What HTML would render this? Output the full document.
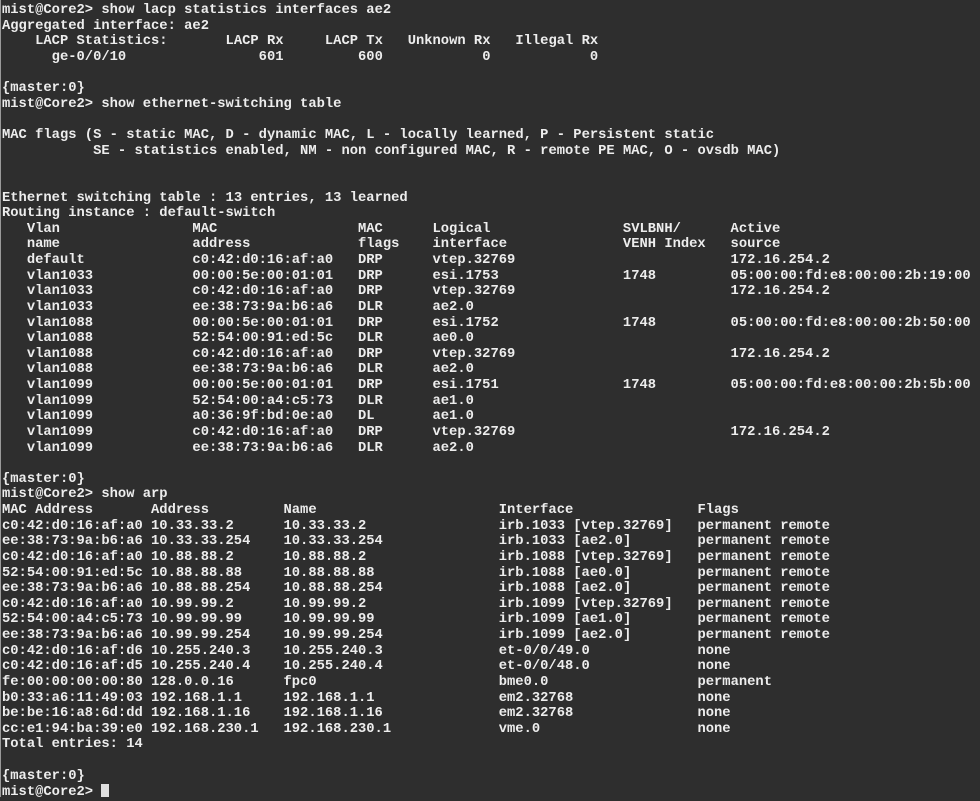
<!DOCTYPE html>
<html><head><meta charset="utf-8"><style>
html,body{margin:0;padding:0;}
body{width:980px;height:797px;background:#2e2e2e;overflow:hidden;position:relative;}
.b{position:absolute;left:0;top:0;width:1px;height:797px;background:#9a9a9a;}
#t{position:absolute;left:2px;top:3px;font-family:"Liberation Mono",monospace;font-weight:bold;font-size:13.8px;color:#ededed;white-space:normal;}
#t div{height:15.64px;line-height:15.64px;white-space:pre;}
i{font-style:normal;display:inline-block;white-space:pre;}
.v{width:20ch}.m{width:20ch}.f{width:9ch}.l{width:23ch}.s{width:13ch}
.a{width:18ch}.d{width:16ch}.n{width:26ch}.x{width:24ch}
.cur{display:inline-block;width:8px;height:13px;background:#e0e0e0;vertical-align:-2px;}
</style></head><body><div class="b"></div><div id="t"><div>mist@Core2&gt; show lacp statistics interfaces ae2</div><div>Aggregated interface: ae2</div><div>    LACP Statistics:       LACP Rx     LACP Tx   Unknown Rx   Illegal Rx</div><div>      ge-0/0/10                601         600            0            0</div><div></div><div>{master:0}</div><div>mist@Core2&gt; show ethernet-switching table</div><div></div><div>MAC flags (S - static MAC, D - dynamic MAC, L - locally learned, P - Persistent static</div><div>           SE - statistics enabled, NM - non configured MAC, R - remote PE MAC, O - ovsdb MAC)</div><div></div><div></div><div>Ethernet switching table : 13 entries, 13 learned</div><div>Routing instance : default-switch</div><div>   <i class="v">Vlan</i><i class="m">MAC</i><i class="f">MAC</i><i class="l">Logical</i><i class="s">SVLBNH/</i>Active</div><div>   <i class="v">name</i><i class="m">address</i><i class="f">flags</i><i class="l">interface</i><i class="s">VENH Index</i>source</div><div>   <i class="v">default</i><i class="m">c0:42:d0:16:af:a0</i><i class="f">DRP</i><i class="l">vtep.32769</i><i class="s"></i>172.16.254.2</div><div>   <i class="v">vlan1033</i><i class="m">00:00:5e:00:01:01</i><i class="f">DRP</i><i class="l">esi.1753</i><i class="s">1748</i>05:00:00:fd:e8:00:00:2b:19:00</div><div>   <i class="v">vlan1033</i><i class="m">c0:42:d0:16:af:a0</i><i class="f">DRP</i><i class="l">vtep.32769</i><i class="s"></i>172.16.254.2</div><div>   <i class="v">vlan1033</i><i class="m">ee:38:73:9a:b6:a6</i><i class="f">DLR</i><i class="l">ae2.0</i></div><div>   <i class="v">vlan1088</i><i class="m">00:00:5e:00:01:01</i><i class="f">DRP</i><i class="l">esi.1752</i><i class="s">1748</i>05:00:00:fd:e8:00:00:2b:50:00</div><div>   <i class="v">vlan1088</i><i class="m">52:54:00:91:ed:5c</i><i class="f">DLR</i><i class="l">ae0.0</i></div><div>   <i class="v">vlan1088</i><i class="m">c0:42:d0:16:af:a0</i><i class="f">DRP</i><i class="l">vtep.32769</i><i class="s"></i>172.16.254.2</div><div>   <i class="v">vlan1088</i><i class="m">ee:38:73:9a:b6:a6</i><i class="f">DLR</i><i class="l">ae2.0</i></div><div>   <i class="v">vlan1099</i><i class="m">00:00:5e:00:01:01</i><i class="f">DRP</i><i class="l">esi.1751</i><i class="s">1748</i>05:00:00:fd:e8:00:00:2b:5b:00</div><div>   <i class="v">vlan1099</i><i class="m">52:54:00:a4:c5:73</i><i class="f">DLR</i><i class="l">ae1.0</i></div><div>   <i class="v">vlan1099</i><i class="m">a0:36:9f:bd:0e:a0</i><i class="f">DL</i><i class="l">ae1.0</i></div><div>   <i class="v">vlan1099</i><i class="m">c0:42:d0:16:af:a0</i><i class="f">DRP</i><i class="l">vtep.32769</i><i class="s"></i>172.16.254.2</div><div>   <i class="v">vlan1099</i><i class="m">ee:38:73:9a:b6:a6</i><i class="f">DLR</i><i class="l">ae2.0</i></div><div></div><div>{master:0}</div><div>mist@Core2&gt; show arp</div><div><i class="a">MAC Address</i><i class="d">Address</i><i class="n">Name</i><i class="x">Interface</i>Flags</div><div><i class="a">c0:42:d0:16:af:a0</i><i class="d">10.33.33.2</i><i class="n">10.33.33.2</i><i class="x">irb.1033 [vtep.32769]</i>permanent remote</div><div><i class="a">ee:38:73:9a:b6:a6</i><i class="d">10.33.33.254</i><i class="n">10.33.33.254</i><i class="x">irb.1033 [ae2.0]</i>permanent remote</div><div><i class="a">c0:42:d0:16:af:a0</i><i class="d">10.88.88.2</i><i class="n">10.88.88.2</i><i class="x">irb.1088 [vtep.32769]</i>permanent remote</div><div><i class="a">52:54:00:91:ed:5c</i><i class="d">10.88.88.88</i><i class="n">10.88.88.88</i><i class="x">irb.1088 [ae0.0]</i>permanent remote</div><div><i class="a">ee:38:73:9a:b6:a6</i><i class="d">10.88.88.254</i><i class="n">10.88.88.254</i><i class="x">irb.1088 [ae2.0]</i>permanent remote</div><div><i class="a">c0:42:d0:16:af:a0</i><i class="d">10.99.99.2</i><i class="n">10.99.99.2</i><i class="x">irb.1099 [vtep.32769]</i>permanent remote</div><div><i class="a">52:54:00:a4:c5:73</i><i class="d">10.99.99.99</i><i class="n">10.99.99.99</i><i class="x">irb.1099 [ae1.0]</i>permanent remote</div><div><i class="a">ee:38:73:9a:b6:a6</i><i class="d">10.99.99.254</i><i class="n">10.99.99.254</i><i class="x">irb.1099 [ae2.0]</i>permanent remote</div><div><i class="a">c0:42:d0:16:af:d6</i><i class="d">10.255.240.3</i><i class="n">10.255.240.3</i><i class="x">et-0/0/49.0</i>none</div><div><i class="a">c0:42:d0:16:af:d5</i><i class="d">10.255.240.4</i><i class="n">10.255.240.4</i><i class="x">et-0/0/48.0</i>none</div><div><i class="a">fe:00:00:00:00:80</i><i class="d">128.0.0.16</i><i class="n">fpc0</i><i class="x">bme0.0</i>permanent</div><div><i class="a">b0:33:a6:11:49:03</i><i class="d">192.168.1.1</i><i class="n">192.168.1.1</i><i class="x">em2.32768</i>none</div><div><i class="a">be:be:16:a8:6d:dd</i><i class="d">192.168.1.16</i><i class="n">192.168.1.16</i><i class="x">em2.32768</i>none</div><div><i class="a">cc:e1:94:ba:39:e0</i><i class="d">192.168.230.1</i><i class="n">192.168.230.1</i><i class="x">vme.0</i>none</div><div>Total entries: 14</div><div></div><div>{master:0}</div><div>mist@Core2&gt; <span class="cur"></span></div></div></body></html>
